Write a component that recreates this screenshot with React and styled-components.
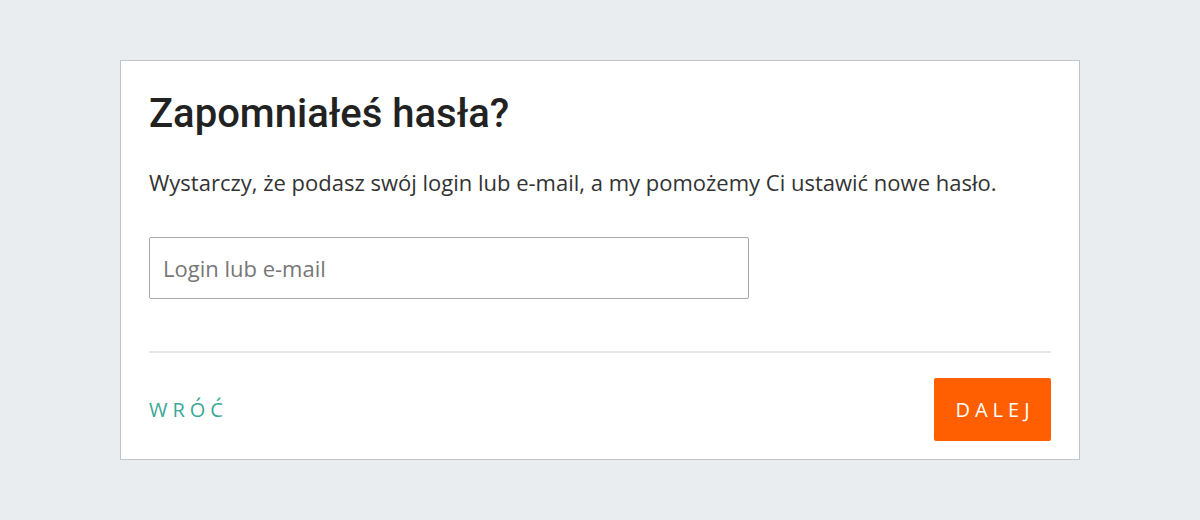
import React from "react";
import styled, { createGlobalStyle } from "styled-components";

const GlobalStyle = createGlobalStyle`
  html, body {
    margin: 0;
    padding: 0;
    background: #e9edf0;
  }
  body {
    font-family: "Open Sans", "Liberation Sans", sans-serif;
  }
`;

const Page = styled.div`
  width: 1200px;
  height: 520px;
  display: flex;
  justify-content: center;
  padding-top: 60px;
  box-sizing: border-box;
`;

const Card = styled.div`
  width: 960px;
  height: 400px;
  box-sizing: border-box;
  background: #fff;
  border: 1px solid #c4c4c4;
  padding: 25px 28px 0 28px;
  display: flex;
  flex-direction: column;
`;

const Title = styled.h1`
  margin: 0;
  font-family: Roboto, "Liberation Sans", sans-serif;
  font-weight: 500;
  font-size: 40px;
  line-height: 56px;
  color: #222;
`;

const Lead = styled.p`
  margin: 25px 0 0;
  font-size: 22px;
  line-height: 30px;
  color: #333;
`;

const Input = styled.input`
  margin-top: 40px;
  width: 600px;
  height: 62px;
  box-sizing: border-box;
  border: 1px solid #aaa;
  border-radius: 2px;
  padding: 0 13px;
  font-family: "Open Sans", "Liberation Sans", sans-serif;
  font-size: 22px;
  color: #333;
  outline: none;
  &::placeholder {
    color: #777;
  }
`;

const Divider = styled.hr`
  margin: 52px 0 0;
  border: none;
  border-top: 2px solid #e6e6e6;
`;

const Footer = styled.div`
  margin-top: 25px;
  display: flex;
  align-items: center;
  justify-content: space-between;
`;

const TextButton = styled.button`
  background: none;
  border: none;
  padding: 0;
  font-family: "Open Sans", "Liberation Sans", sans-serif;
  font-size: 20px;
  letter-spacing: 5px;
  color: #3aa897;
  cursor: pointer;
`;

const PrimaryButton = styled.button`
  width: 117px;
  height: 63px;
  padding: 0 0 0 5px;
  background: #ff5f00;
  border: none;
  border-radius: 2px;
  font-family: "Open Sans", "Liberation Sans", sans-serif;
  font-size: 20px;
  letter-spacing: 5px;
  color: #fff;
  cursor: pointer;
`;

export default function App() {
  return (
    <>
      <GlobalStyle />
      <Page>
        <Card>
          <Title>Zapomniałeś hasła?</Title>
          <Lead>
            Wystarczy, że podasz swój login lub e-mail, a my pomożemy Ci ustawić nowe hasło.
          </Lead>
          <Input placeholder="Login lub e-mail" />
          <Divider />
          <Footer>
            <TextButton>WRÓĆ</TextButton>
            <PrimaryButton>DALEJ</PrimaryButton>
          </Footer>
        </Card>
      </Page>
    </>
  );
}
